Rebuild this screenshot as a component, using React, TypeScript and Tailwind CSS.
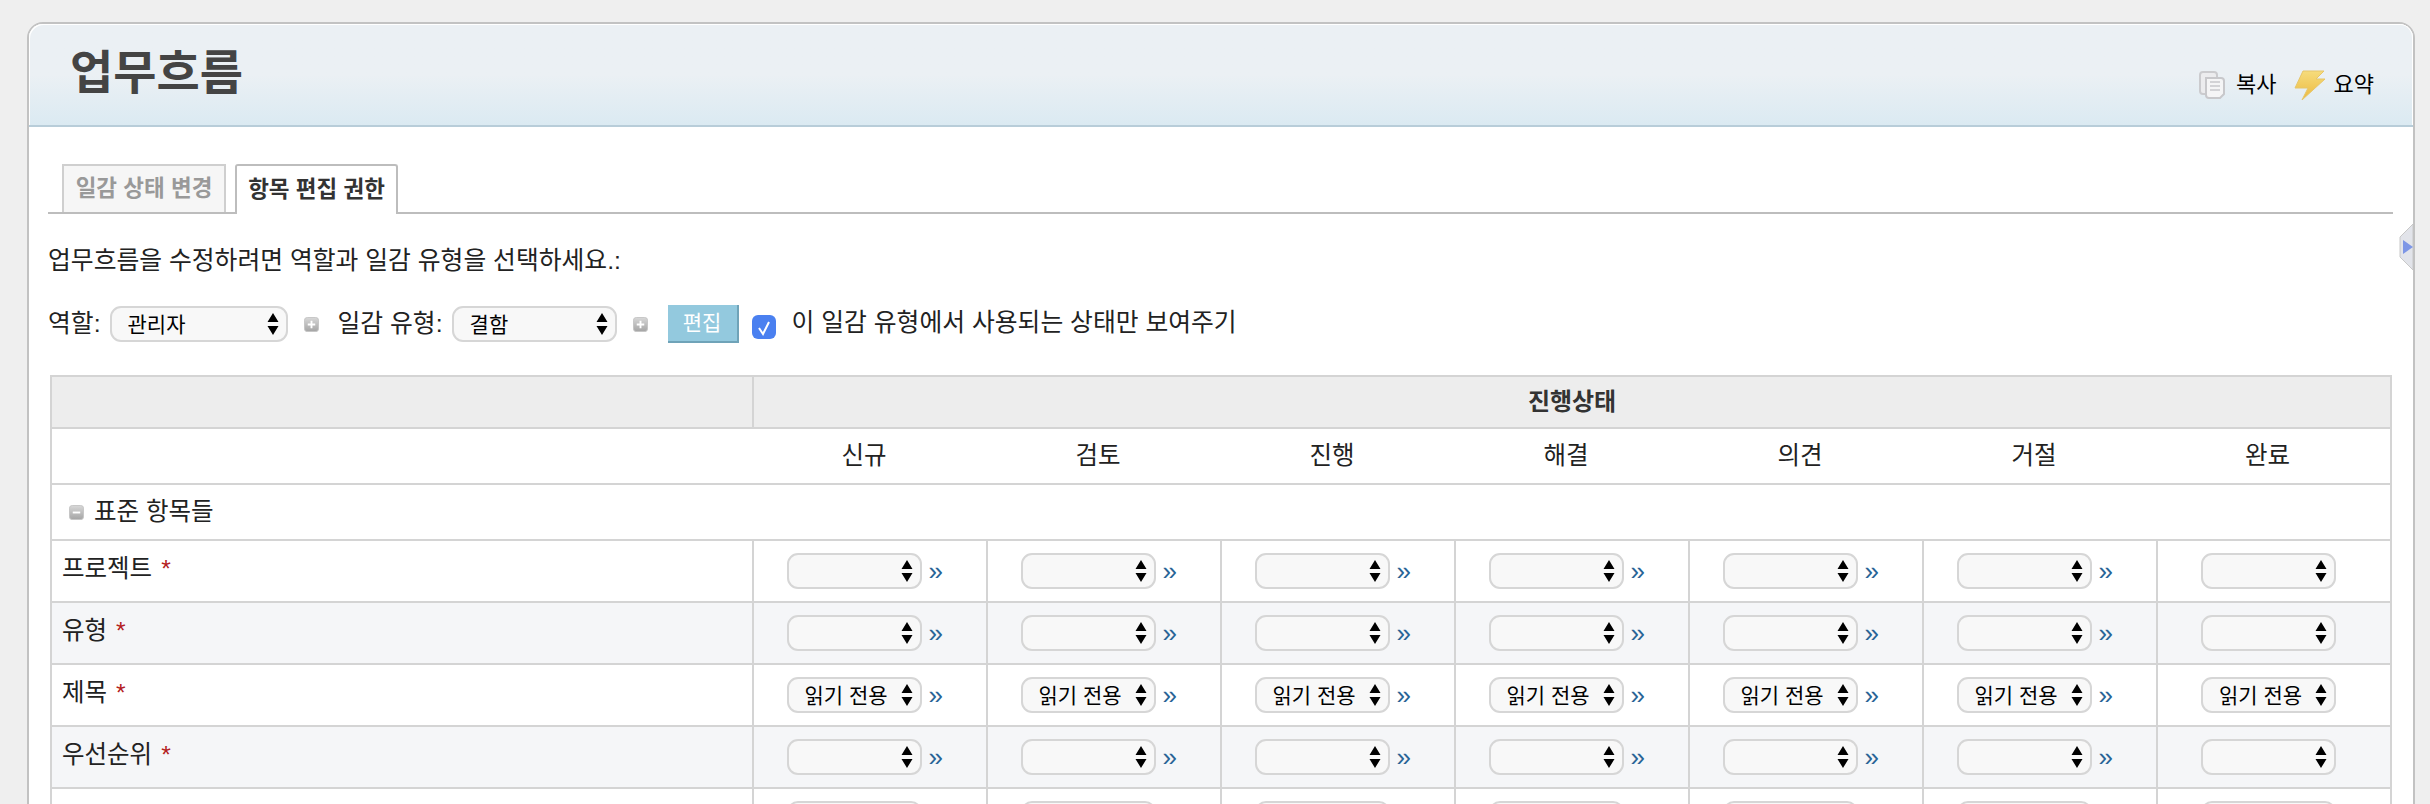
import React from "react";

const FONT = "font-['Liberation_Sans','Noto_Sans_CJK_KR',sans-serif]";

const STATUSES = ["신규", "검토", "진행", "해결", "의견", "거절", "완료"];

const FIELDS = [
  { name: "프로젝트", required: true, value: "" },
  { name: "유형", required: true, value: "" },
  { name: "제목", required: true, value: "읽기 전용" },
  { name: "우선순위", required: true, value: "" },
  { name: "", required: false, value: "" },
];

function SelectArrows() {
  return (
    <svg viewBox="0 0 12 22" className="absolute right-[9px] top-1/2 -translate-y-1/2 w-[12px] h-[22px] pointer-events-none">
      <path d="M6 0 L11.5 9 H0.5 Z M0.5 13 H11.5 L6 22 Z" fill="#000" />
    </svg>
  );
}

function PermSelect({ value = "", className = "" }: { value?: string; className?: string }) {
  return (
    <span className={`relative inline-block shrink-0 ${className}`}>
      <select
        defaultValue={value}
        className="block w-full h-full appearance-none rounded-[11px] border-2 border-[#d6d6d6] bg-[#f8f8f8] pl-[16px] pr-[24px] text-[21px] leading-none text-black outline-none"
      >
        <option value={value}>{value}</option>
      </select>
      <SelectArrows />
    </span>
  );
}

function SquareIcon({ minus = false, className = "" }: { minus?: boolean; className?: string }) {
  return (
    <svg viewBox="0 0 16 16" className={`shrink-0 w-[15px] h-[15px] ${className}`}>
      <defs>
        <linearGradient id={minus ? "sq-m" : "sq-p"} x1="0" y1="0" x2="0" y2="1">
          <stop offset="0" stopColor="#d8d8d8" />
          <stop offset="1" stopColor="#a4a4a4" />
        </linearGradient>
      </defs>
      <rect x="0.5" y="0.5" width="15" height="15" rx="3" fill={`url(#${minus ? "sq-m" : "sq-p"})`} stroke="#c4c4c4" />
      {minus ? <rect x="4" y="7" width="8" height="2" fill="#fff" /> : <path d="M7 4h2v3h3v2H9v3H7V9H4V7h3z" fill="#fff" />}
    </svg>
  );
}

function CopyIcon() {
  return (
    <svg viewBox="0 0 26 28" className="w-[26px] h-[28px] shrink-0">
      <rect x="1" y="1" width="17" height="22" rx="3" fill="#ececee" stroke="#cbcbce" strokeWidth="2" />
      <path d="M7 7h15a3 3 0 0 1 3 3v13l-4 4H10a3 3 0 0 1-3-3z" fill="#f5f5f6" stroke="#c8c8cb" strokeWidth="2" />
      <path d="M11 11h10M11 15h10M11 19h10" stroke="#c8c8cb" strokeWidth="1.5" />
    </svg>
  );
}

function BoltIcon() {
  return (
    <svg viewBox="0 0 32 30" className="w-[32px] h-[30px] shrink-0">
      <defs>
        <linearGradient id="bolt" x1="0" y1="0" x2="0" y2="1">
          <stop offset="0" stopColor="#f6dc7c" />
          <stop offset="1" stopColor="#ecb93f" />
        </linearGradient>
      </defs>
      <path d="M9 1 H30 L22 9 H31 L8 30 L14 18 H1 Z" fill="url(#bolt)" stroke="#e6c66a" strokeWidth="1" />
    </svg>
  );
}

export default function App() {
  return (
    <div className={`h-screen overflow-hidden bg-[#efefef] pt-[22px] pl-[27px] pr-[15px] ${FONT}`}>
      <div className="relative h-[900px] rounded-t-[16px] border-2 border-[#c2c2c2] bg-white">
        {/* Title bar */}
        <div className="flex h-[103px] items-start justify-between rounded-t-[14px] border-b-2 border-[#b8cdd9] bg-gradient-to-b from-[#ebf0f4] from-50% to-[#dbeaf2] pl-[41px] pr-[39px] shadow-[inset_1px_1px_0_#ffffff,inset_-1px_0_0_#ffffff]">
          <h1 className="mt-[14px] text-[47px] leading-[70px] font-bold text-[#444444]">업무흐름</h1>
          <div className="mt-[46px] flex items-center text-[22px] leading-[28px] text-black">
            <CopyIcon />
            <span className="ml-[11px]">복사</span>
            <span className="ml-[17px] flex items-center">
              <BoltIcon />
              <span className="ml-[8px]">요약</span>
            </span>
          </div>
        </div>

        {/* Collapse handle */}
        <svg viewBox="0 0 14 46" className="absolute right-0 top-[200px] w-[14px] h-[46px]">
          <path d="M14 0 L1 13 V33 L14 46 Z" fill="#e2e4ea" stroke="#c8c8c8" />
          <path d="M4 16 L14 23 L4 30 Z" fill="#7d96e6" />
        </svg>

        <div className="pl-[19px] pr-[20px] pt-[37px] text-[#222222]">
          {/* Tabs */}
          <div className="flex h-[50px] items-end border-b-2 border-[#bdbdbd] pl-[14px] text-[22.5px] font-bold leading-none">
            <div className="flex h-[48px] w-[164px] items-center justify-center border-2 border-b-0 border-[#cfcfcf] bg-[#f6f6f6] text-[#999999] whitespace-nowrap">
              일감 상태 변경
            </div>
            <div className="relative top-[2px] ml-[9px] flex h-[50px] w-[163px] items-center justify-center rounded-t-[3px] border-2 border-b-0 border-[#bdbdbd] bg-white text-[#333333] whitespace-nowrap">
              항목 편집 권한
            </div>
          </div>

          <p className="mt-[30px] text-[24.8px] leading-[34px]">업무흐름을 수정하려면 역할과 일감 유형을 선택하세요.:</p>

          {/* Filters */}
          <div className="mt-[27px] flex h-[38px] items-center text-[24.8px]">
            <span>역할:</span>
            <PermSelect value="관리자" className="ml-[9px] w-[178px] h-[36px]" />
            <SquareIcon className="ml-[16px]" />
            <span className="ml-[19px]">일감 유형:</span>
            <PermSelect value="결함" className="ml-[9px] w-[165px] h-[36px]" />
            <SquareIcon className="ml-[16px]" />
            <button className="ml-[20px] h-[38px] w-[71px] border-r-2 border-b-2 border-[#6fa3b8] bg-[#93c9de] text-[21px] text-white">편집</button>
            <span className="relative ml-[13px] mt-[6px] h-[24px] w-[24px] shrink-0">
              <input type="checkbox" defaultChecked className="block h-full w-full appearance-none rounded-[6px] bg-[#4a80f0]" />
              <svg viewBox="0 0 24 24" className="absolute inset-0 pointer-events-none">
                <path d="M7 13 L11 19 L17 7" fill="none" stroke="#fff" strokeWidth="2" />
              </svg>
            </span>
            <label className="ml-[16px] -mt-[2px]">이 일감 유형에서 사용되는 상태만 보여주기</label>
          </div>

          {/* Permissions table */}
          <table className="mt-[32px] ml-[2px] w-[2340px] table-fixed border-collapse text-[24.5px]">
            <colgroup>
              <col className="w-[702px]" />
              {STATUSES.map((s) => (
                <col key={s} className="w-[234px]" />
              ))}
            </colgroup>
            <thead>
              <tr className="h-[52px] bg-[#ededed]">
                <th className="border-2 border-[#d4d4d4]"></th>
                <th colSpan={7} className="border-2 border-[#d4d4d4] text-[24px] font-bold text-[#333333]">
                  진행상태
                </th>
              </tr>
              <tr className="h-[56px]">
                <td className="border-y-2 border-l-2 border-[#d4d4d4]"></td>
                {STATUSES.map((s) => (
                  <td key={s} className="border-y-2 border-[#d4d4d4] pr-[12px] text-center font-normal last:border-r-2">
                    {s}
                  </td>
                ))}
              </tr>
            </thead>
            <tbody>
              <tr className="h-[56px]">
                <td colSpan={8} className="border-2 border-[#d4d4d4] pl-[17px]">
                  <span className="flex items-center">
                    <SquareIcon minus className="mr-[10px]" />
                    표준 항목들
                  </span>
                </td>
              </tr>
              {FIELDS.map((field, i) => (
                <tr key={i} className={`h-[62px] ${i % 2 === 1 ? "bg-[#f5f6f8]" : "bg-white"}`}>
                  <td className="border-2 border-[#d4d4d4] pl-[10px] pb-[4px]">
                    {field.name}
                    {field.required && <span className="ml-[9px] text-[#b32020]">*</span>}
                  </td>
                  {STATUSES.map((s, j) => (
                    <td key={s} className="border-2 border-[#d4d4d4] pr-[11px]">
                      <div className="flex items-center justify-center">
                        <PermSelect value={field.value} className="w-[135px] h-[36px]" />
                        {j < STATUSES.length - 1 && (
                          <a className="ml-[7px] w-[14px] text-center text-[26px] leading-none text-[#2a6496]">»</a>
                        )}
                      </div>
                    </td>
                  ))}
                </tr>
              ))}
            </tbody>
          </table>
        </div>
      </div>
    </div>
  );
}
